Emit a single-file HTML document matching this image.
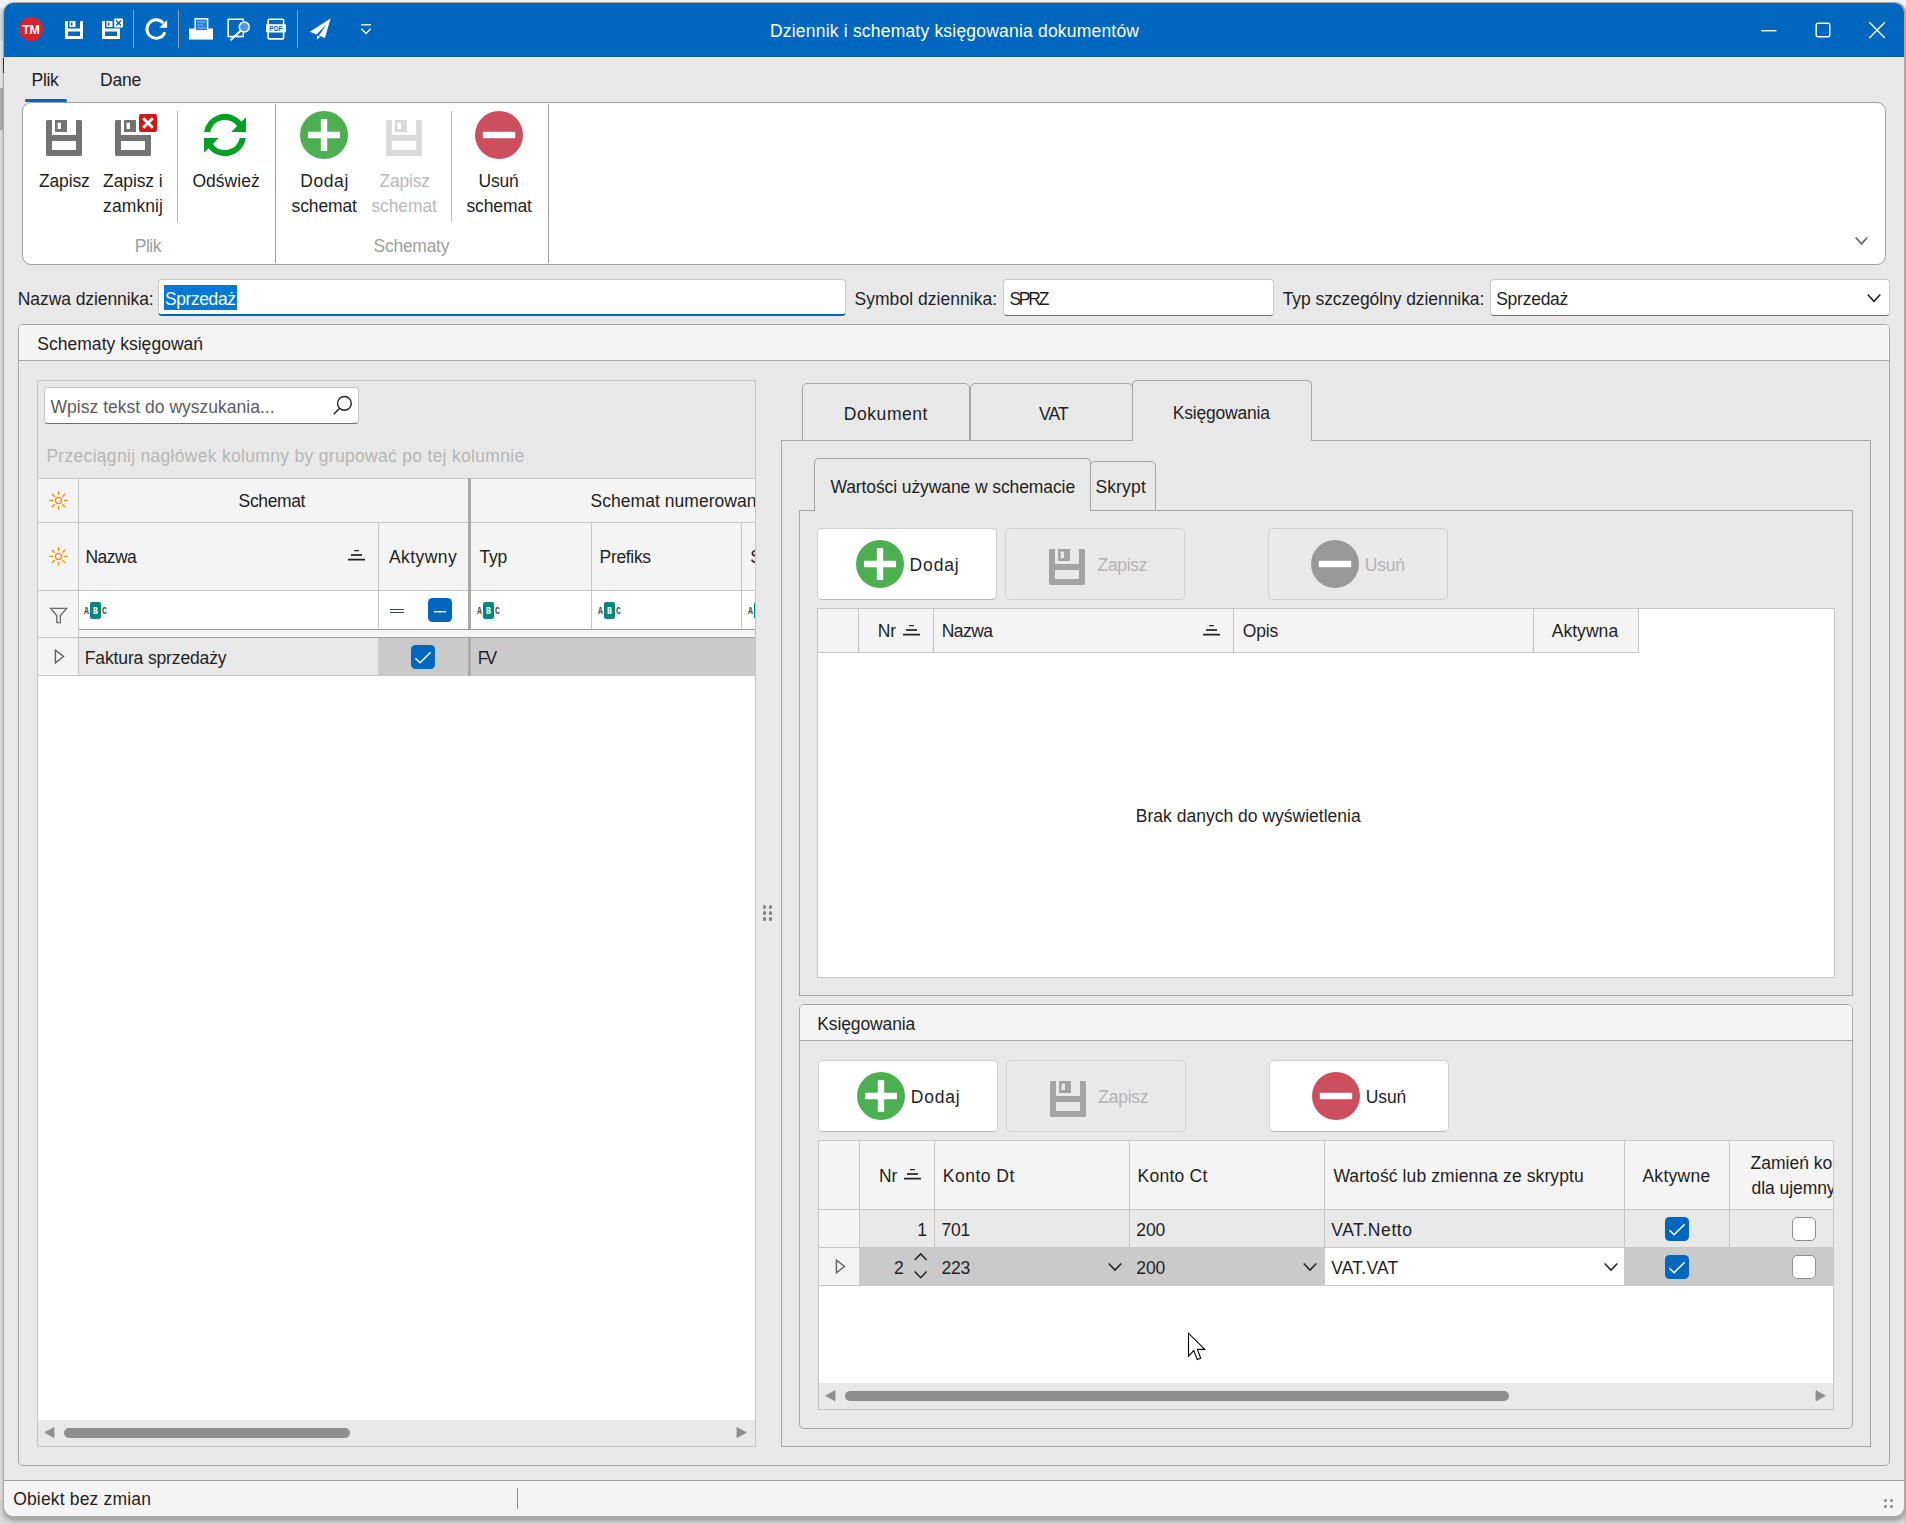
<!DOCTYPE html>
<html lang="pl"><head><meta charset="utf-8"><title>Dziennik i schematy księgowania dokumentów</title>
<style>
html,body{margin:0;padding:0}
body{width:1906px;height:1524px;position:relative;overflow:hidden;background:#f1f1f1;font-family:"Liberation Sans", sans-serif;font-size:17.5px;color:#1f1f1f}
div,span,svg{position:absolute;display:block}
span{white-space:nowrap}
</style></head>
<body>
<div style="left:0px;top:0px;width:1906px;height:1524px;background:#f1f1f1"></div>
<div style="left:0px;top:8px;width:4px;height:33px;background:#dedede"></div>
<div style="left:0px;top:41px;width:4px;height:47px;background:#ececec"></div>
<div style="left:0px;top:88px;width:4px;height:42px;background:#b4b4b4"></div>
<div style="left:0px;top:130px;width:4px;height:1394px;background:#e4e4e4"></div>
<div style="left:0px;top:1500px;width:1906px;height:24px;background:#dadada"></div>
<div style="left:1904px;top:40px;width:2px;height:1484px;background:#cfcfcf"></div>
<div style="left:2.5px;top:1.5px;width:1903px;height:1516.5px;background:#a9a9a9;border-radius:11px;box-shadow:0 3px 4px rgba(0,0,0,.28)"></div>
<div style="left:4px;top:3px;width:1900px;height:1513px;background:#e8e8e8;border-radius:9.5px"></div>
<div style="left:4px;top:3px;width:1900px;height:54px;background:#0067c0;border-radius:9.5px 9.5px 0 0"></div>
<div style="left:2.6px;top:58px;width:1.3px;height:15px;background:#3a3026"></div>
<div style="left:4px;top:56px;width:1900px;height:1px;background:#005cbb"></div>
<div style="left:4px;top:57px;width:1900px;height:1px;background:#f2eee8"></div>
<div style="left:4px;top:1480px;width:1900px;height:36px;background:#f4f4f4;border-top:1px solid #a4a4a4;border-radius:0 0 9.5px 9.5px;box-sizing:border-box"></div>
<div style="left:517px;top:1488px;width:1px;height:21px;background:#8a8a8a"></div>
<span style="left:13.20px;top:1487px;line-height:24px;color:#1f1f1f;letter-spacing:0.169px;">Obiekt bez zmian</span>
<div style="left:1884.1px;top:1499.0px;width:3px;height:3px;background:#8a8a8a;border-radius:50%"></div>
<div style="left:1884.1px;top:1505.0px;width:3px;height:3px;background:#8a8a8a;border-radius:50%"></div>
<div style="left:1890.2px;top:1499.0px;width:3px;height:3px;background:#8a8a8a;border-radius:50%"></div>
<div style="left:1890.2px;top:1505.0px;width:3px;height:3px;background:#8a8a8a;border-radius:50%"></div>
<svg style="left:19px;top:17px;" width="24" height="24" viewBox="0 0 24 24"><circle cx="12" cy="12" r="12" fill="#dc2128"/></svg>
<span style="left:22.20px;top:21px;line-height:18px;color:#fff;letter-spacing:-0.369px;font-size:12.4px;font-weight:bold;">TM</span>
<svg style="left:65px;top:21px;" width="18" height="18" viewBox="0 0 36 36"><path fill="#fff" fill-rule="evenodd" d="M1.5 0H6V15H30V0H34.5Q36 0 36 1.5V34.5Q36 36 34.5 36H1.5Q0 36 0 34.5V1.5Q0 0 1.5 0ZM6 21H30V30H6ZM9 0H21V12H9ZM11.6 2.8H15V9.1H11.6Z"/></svg>
<svg style="left:102px;top:21px;" width="18" height="18" viewBox="0 0 36 36"><path fill="#fff" fill-rule="evenodd" d="M1.5 0H6V15H36V34.5Q36 36 34.5 36H1.5Q0 36 0 34.5V1.5Q0 0 1.5 0ZM6 21H30V30H6ZM9 0H21V12H9ZM11.6 2.8H15V9.1H11.6Z"/></svg>
<svg style="left:114px;top:18px;" width="9.5" height="9.5" viewBox="0 0 9.5 9.5"><rect x=".2" y=".4" width="8.8" height="9.1" rx=".8" fill="#fff"/><path d="M2.2 2.5L7 7.4M7 2.5L2.2 7.4" stroke="#0067c0" stroke-width="1.4"/></svg>
<div style="left:133px;top:10px;width:1px;height:38px;background:#9d9a94"></div>
<div style="left:178px;top:10px;width:1px;height:38px;background:#9d9a94"></div>
<div style="left:297px;top:10px;width:1px;height:38px;background:#9d9a94"></div>
<svg style="left:144px;top:17px;" width="25" height="24" viewBox="0 0 25 24"><path d="M19.2 6.1A9.2 9.2 0 1 0 20.85 15.15" fill="none" stroke="#fff" stroke-width="3"/><path d="M23.1 3.1V10.7H15.2Z" fill="#fff"/></svg>
<svg style="left:188px;top:17px;" width="26" height="24" viewBox="0 0 26 24"><path d="M1 11.5H25V22.6H1Z" fill="#fff"/><rect x="7.2" y="1.8" width="12.4" height="12" fill="#2a7bd0" stroke="#fff" stroke-width="1.5"/><path d="M9.5 5H17.5M9.5 8H15M9.5 11H17.5" stroke="#8cbcec" stroke-width="1.1"/></svg>
<svg style="left:226px;top:17px;" width="26" height="26" viewBox="0 0 26 26"><path d="M17.3 4V2.3H2.2V19.6H13" fill="none" stroke="#fff" stroke-width="1.5"/><path d="M17.3 15.5V19.6H10.5" fill="none" stroke="#fff" stroke-width="1.5"/><circle cx="18.3" cy="10" r="5" fill="#4f97e0" stroke="#fff" stroke-width="1.5"/><path d="M14.6 13.8L4.5 23.3" stroke="#fff" stroke-width="2"/></svg>
<svg style="left:265px;top:17px;" width="23" height="24" viewBox="0 0 23 24"><rect x="3.2" y="2.3" width="15.4" height="19.6" rx="1" fill="none" stroke="#fff" stroke-width="1.6"/><rect x="1" y="7.2" width="20" height="8.4" rx="1" fill="#fff"/></svg>
<svg style="left:266px;top:24px;" width="20" height="9" viewBox="0 0 20 9"><text x="3.3" y="6.8" font-family="Liberation Sans, sans-serif" font-weight="bold" font-size="7.6" textLength="13.4" lengthAdjust="spacingAndGlyphs" fill="#0067c0">PDF</text></svg>
<svg style="left:308px;top:17px;" width="25" height="24" viewBox="0 0 25 24"><path d="M22.6 1.6L1.8 14.8L8.6 17.6L18.5 7.2L11 18.6L16.9 21Z" fill="#fff"/><path d="M9 18.6L9.1 22.4L12.3 19.8Z" fill="#fff"/></svg>
<svg style="left:360px;top:23px;" width="12" height="12" viewBox="0 0 12 12"><path d="M1 1.8H11" stroke="#fff" stroke-width="1.3"/><path d="M1.4 5.7L6 10.4L10.6 5.7" fill="none" stroke="#fff" stroke-width="1.4"/></svg>
<span style="left:770.00px;top:19px;line-height:24px;color:#fff;letter-spacing:0.197px;">Dziennik i schematy księgowania dokumentów</span>
<svg style="left:1760px;top:22px;" width="18" height="17" viewBox="0 0 18 17"><path d="M1.4 8.7H16.5" stroke="#fff" stroke-width="1.4"/></svg>
<svg style="left:1814px;top:21px;" width="18" height="18" viewBox="0 0 18 18"><rect x="2.2" y="2.2" width="13.6" height="13.6" rx="2" fill="none" stroke="#fff" stroke-width="1.4"/></svg>
<svg style="left:1868px;top:21px;" width="18" height="18" viewBox="0 0 18 18"><path d="M1.3 1.3L16.9 16.9M16.9 1.3L1.3 16.9" stroke="#fff" stroke-width="1.4"/></svg>
<span style="left:31.60px;top:68px;line-height:24px;color:#1f1f1f;letter-spacing:-0.349px;">Plik</span>
<span style="left:100.10px;top:68px;line-height:24px;color:#1f1f1f;letter-spacing:-0.201px;">Dane</span>
<div style="left:25px;top:99px;width:42px;height:3px;background:#0067c0;border-radius:1.5px"></div>
<div style="left:22px;top:102px;width:1864px;height:163px;background:#fff;border:1px solid #a2a2a2;border-radius:9px;box-sizing:border-box"></div>
<svg style="left:46px;top:120px;" width="36" height="36" viewBox="0 0 36 36"><path fill="#737373" fill-rule="evenodd" d="M1.5 0H6V15H30V0H34.5Q36 0 36 1.5V34.5Q36 36 34.5 36H1.5Q0 36 0 34.5V1.5Q0 0 1.5 0ZM6 21H30V30H6ZM9 0H21V12H9ZM11.6 2.8H15V9.1H11.6Z"/></svg>
<svg style="left:115px;top:120px;" width="36" height="36" viewBox="0 0 36 36"><path fill="#737373" fill-rule="evenodd" d="M1.5 0H6V15H36V34.5Q36 36 34.5 36H1.5Q0 36 0 34.5V1.5Q0 0 1.5 0ZM6 21H30V30H6ZM9 0H21V12H9ZM11.6 2.8H15V9.1H11.6Z"/></svg>
<svg style="left:139px;top:114px;" width="18" height="18" viewBox="0 0 18 18"><rect width="18" height="18" rx="2" fill="#d01818"/><path d="M4.2 4.2L13.8 13.8M13.8 4.2L4.2 13.8" stroke="#fff" stroke-width="2.9"/></svg>
<div style="left:177px;top:111px;width:1px;height:111px;background:#b9b9b9"></div>
<div style="left:451px;top:111px;width:1px;height:111px;background:#b9b9b9"></div>
<div style="left:275px;top:104px;width:1px;height:159px;background:#9c9c9c"></div>
<div style="left:548px;top:104px;width:1px;height:159px;background:#9c9c9c"></div>
<svg style="left:204px;top:114px;" width="42" height="42" viewBox="0 0 42 42"><path d="M.2 18A21 21 0 0 1 37.4 7.8L42 3.2V18H27.2L33.1 12.1A15 15 0 0 0 6.3 18Z" fill="#04a024"/><path d="M.2 18A21 21 0 0 1 37.4 7.8L42 3.2V18H27.2L33.1 12.1A15 15 0 0 0 6.3 18Z" fill="#04a024" transform="rotate(180 21 21)"/></svg>
<svg style="left:300px;top:111px;" width="48" height="48" viewBox="0 0 48 48"><circle cx="24" cy="24" r="24" fill="#4caf50"/><path fill="#fff" d="M20.8 8H27.2V20.8H40V27.2H27.2V40H20.8V27.2H8V20.8H20.8Z"/></svg>
<svg style="left:386px;top:120px;" width="36" height="36" viewBox="0 0 36 36"><path fill="#d9d9d9" fill-rule="evenodd" d="M1.5 0H6V15H30V0H34.5Q36 0 36 1.5V34.5Q36 36 34.5 36H1.5Q0 36 0 34.5V1.5Q0 0 1.5 0ZM6 21H30V30H6ZM9 0H21V12H9ZM11.6 2.8H15V9.1H11.6Z"/></svg>
<svg style="left:475px;top:111px;" width="48" height="48" viewBox="0 0 48 48"><circle cx="24" cy="24" r="24" fill="#cb4f5c"/><rect x="7.8" y="20.8" width="32.4" height="6.4" fill="#fff"/></svg>
<span style="left:38.90px;top:169px;line-height:24px;color:#1f1f1f;letter-spacing:-0.139px;">Zapisz</span>
<span style="left:103.10px;top:169px;line-height:24px;color:#1f1f1f;letter-spacing:-0.115px;">Zapisz i</span>
<span style="left:103.10px;top:194px;line-height:24px;color:#1f1f1f;letter-spacing:0.095px;">zamknij</span>
<span style="left:192.40px;top:169px;line-height:24px;color:#1f1f1f;letter-spacing:0.024px;">Odśwież</span>
<span style="left:300.20px;top:169px;line-height:24px;color:#1f1f1f;letter-spacing:0.591px;">Dodaj</span>
<span style="left:291.50px;top:194px;line-height:24px;color:#1f1f1f;letter-spacing:-0.113px;">schemat</span>
<span style="left:379.60px;top:169px;line-height:24px;color:#b9b9b9;letter-spacing:-0.239px;">Zapisz</span>
<span style="left:371.40px;top:194px;line-height:24px;color:#b9b9b9;letter-spacing:-0.096px;">schemat</span>
<span style="left:478.60px;top:169px;line-height:24px;color:#1f1f1f;letter-spacing:-0.207px;">Usuń</span>
<span style="left:466.50px;top:194px;line-height:24px;color:#1f1f1f;letter-spacing:-0.129px;">schemat</span>
<span style="left:134.70px;top:234px;line-height:24px;color:#9e9e9e;letter-spacing:-0.449px;">Plik</span>
<span style="left:373.60px;top:234px;line-height:24px;color:#9e9e9e;letter-spacing:-0.280px;">Schematy</span>
<svg style="left:1855px;top:237px;overflow:visible;" width="13" height="7.8" viewBox="0 0 13 7.8"><path d="M.7 .5L6.5 6.8999999999999995L12.3 .5" fill="none" stroke="#6a6a6a" stroke-width="1.8"/></svg>
<span style="left:17.80px;top:287px;line-height:24px;color:#1f1f1f;letter-spacing:-0.086px;">Nazwa dziennika:</span>
<div style="left:158px;top:279px;width:688px;height:37px;background:#fff;border:1px solid #c9c9c9;border-bottom:2.5px solid #0067c0;border-radius:4px;box-sizing:border-box"></div>
<div style="left:164px;top:285px;width:73px;height:25px;background:#0078d7"></div>
<span style="left:165.00px;top:287px;line-height:24px;color:#fff;letter-spacing:-0.426px;">Sprzedaż</span>
<span style="left:854.50px;top:287px;line-height:24px;color:#1f1f1f;letter-spacing:0.040px;">Symbol dziennika:</span>
<div style="left:1003px;top:279px;width:271px;height:37px;background:#fff;border:1px solid #c9c9c9;border-bottom:1.5px solid #6c6c6c;border-radius:4px;box-sizing:border-box"></div>
<span style="left:1009.40px;top:287px;line-height:24px;color:#1f1f1f;letter-spacing:-2.228px;">SPRZ</span>
<span style="left:1282.70px;top:287px;line-height:24px;color:#1f1f1f;letter-spacing:-0.068px;">Typ szczególny dziennika:</span>
<div style="left:1490px;top:279px;width:400px;height:37px;background:#fff;border:1px solid #c9c9c9;border-bottom:1.5px solid #6c6c6c;border-radius:4px;box-sizing:border-box"></div>
<span style="left:1496.20px;top:287px;line-height:24px;color:#1f1f1f;letter-spacing:-0.254px;">Sprzedaż</span>
<svg style="left:1867px;top:293.5px;overflow:visible;" width="14" height="8.2" viewBox="0 0 14 8.2"><path d="M.7 .5L7.0 7.299999999999999L13.3 .5" fill="none" stroke="#222" stroke-width="1.5"/></svg>
<div style="left:18px;top:324px;width:1872px;height:1142px;border:1px solid #a6a6a6;border-radius:5px;box-sizing:border-box"></div>
<div style="left:19px;top:325px;width:1870px;height:36px;background:#f4f4f4;border-bottom:1px solid #a6a6a6;border-radius:4px 4px 0 0;box-sizing:border-box"></div>
<span style="left:37.30px;top:332px;line-height:24px;color:#1f1f1f;letter-spacing:0.022px;">Schematy księgowań</span>
<div style="left:37px;top:380px;width:719px;height:1067px;border:1px solid #c6c6c6;box-sizing:border-box"></div>
<div style="left:44px;top:387px;width:315px;height:37px;background:#fff;border:1px solid #c9c9c9;border-bottom:1.5px solid #6c6c6c;border-radius:4px;box-sizing:border-box"></div>
<span style="left:50.60px;top:395px;line-height:24px;color:#5c5c5c;letter-spacing:0.010px;">Wpisz tekst do wyszukania...</span>
<svg style="left:332px;top:395px;" width="22" height="21" viewBox="0 0 22 21"><circle cx="12.45" cy="8.4" r="6.85" fill="none" stroke="#222" stroke-width="1.4"/><path d="M7.6 13.3L1.8 19.2" stroke="#222" stroke-width="1.5"/></svg>
<span style="left:46.40px;top:444px;line-height:24px;color:#b6b6b6;letter-spacing:0.303px;">Przeciągnij nagłówek kolumny by grupować po tej kolumnie</span>
<div style="left:38px;top:478px;width:717px;height:112px;background:#f4f4f4;border-top:1px solid #c6c6c6;box-sizing:border-box"></div>
<div style="left:38px;top:522px;width:717px;height:1px;background:#c6c6c6"></div>
<div style="left:38px;top:590px;width:717px;height:1px;background:#c6c6c6"></div>
<div style="left:79px;top:591px;width:676px;height:38px;background:#fff"></div>
<div style="left:38px;top:591px;width:40px;height:46px;background:#f4f4f4"></div>
<div style="left:79px;top:628.5px;width:676px;height:1.8px;background:#9a9a9a"></div>
<div style="left:79px;top:630.3px;width:676px;height:7px;background:#f4f4f4"></div>
<div style="left:38px;top:637px;width:41px;height:1px;background:#c6c6c6"></div>
<div style="left:79px;top:636.8px;width:676px;height:1.3px;background:#a2a2a2"></div>
<div style="left:38px;top:638px;width:40px;height:37px;background:#f4f4f4"></div>
<div style="left:79px;top:638px;width:299px;height:37px;background:#e8e8e8"></div>
<div style="left:378px;top:638px;width:377px;height:37px;background:#cacaca"></div>
<div style="left:38px;top:675px;width:717px;height:1px;background:#c6c6c6"></div>
<div style="left:38px;top:676px;width:717px;height:744px;background:#fff"></div>
<div style="left:78px;top:478px;width:1px;height:198px;background:#c6c6c6"></div>
<div style="left:378px;top:522px;width:1px;height:107px;background:#c6c6c6"></div>
<div style="left:591px;top:522px;width:1px;height:107px;background:#c6c6c6"></div>
<div style="left:741px;top:522px;width:1px;height:107px;background:#c6c6c6"></div>
<div style="left:468px;top:478px;width:3px;height:151px;background:#a9a9a9"></div>
<div style="left:468px;top:637px;width:3px;height:39px;background:#a9a9a9"></div>
<svg style="left:48px;top:490px;" width="21" height="21" viewBox="0 0 21 21"><circle cx="10.5" cy="10.5" r="3.05" fill="none" stroke="#ff8c00" stroke-width="1.25"/><path d="M16.40 10.50L19.30 10.50M14.67 14.67L16.72 16.72M10.50 16.40L10.50 19.30M6.33 14.67L4.28 16.72M4.60 10.50L1.70 10.50M6.33 6.33L4.28 4.28M10.50 4.60L10.50 1.70M14.67 6.33L16.72 4.28" stroke="#ff8c00" stroke-width="1.3" stroke-linecap="round"/></svg>
<svg style="left:48px;top:546px;" width="21" height="21" viewBox="0 0 21 21"><circle cx="10.5" cy="10.399999999999977" r="3.05" fill="none" stroke="#ff8c00" stroke-width="1.25"/><path d="M16.40 10.40L19.30 10.40M14.67 14.57L16.72 16.62M10.50 16.30L10.50 19.20M6.33 14.57L4.28 16.62M4.60 10.40L1.70 10.40M6.33 6.23L4.28 4.18M10.50 4.50L10.50 1.60M14.67 6.23L16.72 4.18" stroke="#ff8c00" stroke-width="1.3" stroke-linecap="round"/></svg>
<span style="left:238.60px;top:489px;line-height:24px;color:#1f1f1f;letter-spacing:-0.366px;">Schemat</span>
<div style="left:471px;top:489px;width:284px;height:24px;overflow:hidden"><span style="left:119.50px;top:0;line-height:24px;color:#1f1f1f;letter-spacing:0.042px;">Schemat numerowania</span></div>
<span style="left:85.50px;top:545px;line-height:24px;color:#1f1f1f;letter-spacing:-0.565px;">Nazwa</span>
<svg style="left:348px;top:550px;" width="17" height="11" viewBox="0 0 17 11"><rect x="6" y="0" width="5" height="1.2" rx=".6" fill="#222"/><rect x="3" y="4" width="11" height="2" fill="#404040"/><rect x="0" y="8.8" width="17" height="1.6" rx=".5" fill="#222"/></svg>
<span style="left:389.00px;top:545px;line-height:24px;color:#1f1f1f;letter-spacing:0.432px;">Aktywny</span>
<span style="left:479.50px;top:545px;line-height:24px;color:#1f1f1f;letter-spacing:-0.237px;">Typ</span>
<span style="left:599.60px;top:545px;line-height:24px;color:#1f1f1f;letter-spacing:-0.339px;">Prefiks</span>
<div style="left:742px;top:545px;width:13px;height:24px;overflow:hidden"><span style="left:8.30px;top:0;line-height:24px;color:#1f1f1f;letter-spacing:0.000px;">Sufiks</span></div>
<svg style="left:49px;top:607px;" width="20" height="17" viewBox="0 0 20 17"><path d="M1.6 1.4H17.6L11.4 8.6V15.6H7.8V8.6Z" fill="none" stroke="#6e6e6e" stroke-width="1.4" stroke-linejoin="miter"/></svg>
<div style="left:84px;top:602px;width:24px;height:17px;font:bold 11px 'Liberation Mono',monospace;color:#4a4a4a;line-height:18px;white-space:nowrap"><span style="left:.1px;top:0;transform:scaleX(.74);transform-origin:0 0">A</span><span style="left:6.3px;top:.4px;width:10.6px;height:16.4px;background:#00897b;border-radius:2px"></span><span style="left:9.2px;top:0;color:#fff;transform:scaleX(.74);transform-origin:0 0">B</span><span style="left:18.3px;top:0;transform:scaleX(.74);transform-origin:0 0">C</span></div>
<div style="left:477px;top:602px;width:24px;height:17px;font:bold 11px 'Liberation Mono',monospace;color:#4a4a4a;line-height:18px;white-space:nowrap"><span style="left:.1px;top:0;transform:scaleX(.74);transform-origin:0 0">A</span><span style="left:6.3px;top:.4px;width:10.6px;height:16.4px;background:#00897b;border-radius:2px"></span><span style="left:9.2px;top:0;color:#fff;transform:scaleX(.74);transform-origin:0 0">B</span><span style="left:18.3px;top:0;transform:scaleX(.74);transform-origin:0 0">C</span></div>
<div style="left:598px;top:602px;width:24px;height:17px;font:bold 11px 'Liberation Mono',monospace;color:#4a4a4a;line-height:18px;white-space:nowrap"><span style="left:.1px;top:0;transform:scaleX(.74);transform-origin:0 0">A</span><span style="left:6.3px;top:.4px;width:10.6px;height:16.4px;background:#00897b;border-radius:2px"></span><span style="left:9.2px;top:0;color:#fff;transform:scaleX(.74);transform-origin:0 0">B</span><span style="left:18.3px;top:0;transform:scaleX(.74);transform-origin:0 0">C</span></div>
<div style="left:742px;top:590px;width:13px;height:38px;overflow:hidden">
<div style="left:6.0px;top:12px;width:24px;height:17px;font:bold 11px 'Liberation Mono',monospace;color:#4a4a4a;line-height:18px;white-space:nowrap"><span style="left:.1px;top:0;transform:scaleX(.74);transform-origin:0 0">A</span><span style="left:6.3px;top:.4px;width:10.6px;height:16.4px;background:#00897b;border-radius:2px"></span><span style="left:9.2px;top:0;color:#fff;transform:scaleX(.74);transform-origin:0 0">B</span><span style="left:18.3px;top:0;transform:scaleX(.74);transform-origin:0 0">C</span></div>
</div>
<div style="left:390px;top:608.5px;width:14px;height:1.3px;background:#3d464b"></div>
<div style="left:390px;top:611.7px;width:14px;height:1.3px;background:#3d464b"></div>
<svg style="left:428px;top:598px;" width="24" height="24" viewBox="0 0 24 24"><rect width="24" height="24" rx="4.5" fill="#0067c0"/><path d="M6 13.7H18" stroke="#fff" stroke-width="1.5"/></svg>
<svg style="left:54px;top:649px;" width="10.5" height="15" viewBox="0 0 10.5 15"><path d="M1.4 1.1L9.5 7.5L1.4 13.8Z" fill="none" stroke="#666" stroke-width="1.45" stroke-linejoin="miter"/></svg>
<span style="left:84.80px;top:646px;line-height:24px;color:#1f1f1f;letter-spacing:-0.137px;">Faktura sprzedaży</span>
<svg style="left:411px;top:645px;" width="24" height="24" viewBox="0 0 24 24"><rect width="24" height="24" rx="4.5" fill="#0067c0"/><path d="M4.4 13.3L9.1 17.7L19.7 7.2" fill="none" stroke="#fff" stroke-width="1.55"/></svg>
<span style="left:477.80px;top:646px;line-height:24px;color:#1f1f1f;letter-spacing:-3.090px;">FV</span>
<div style="left:38px;top:1420px;width:717px;height:26px;background:#e8e8e8"></div>
<svg style="left:44px;top:1427px;" width="11" height="11" viewBox="0 0 11 11"><path d="M.8 5.5L10 .5V10.5Z" fill="#8e8e8e" stroke="#8e8e8e" stroke-width=".8" stroke-linejoin="round"/></svg>
<svg style="left:736px;top:1427px;" width="11" height="11" viewBox="0 0 11 11"><path d="M10.2 5.5L1 .5V10.5Z" fill="#8e8e8e" stroke="#8e8e8e" stroke-width=".8" stroke-linejoin="round"/></svg>
<div style="left:64px;top:1428px;width:286px;height:10px;background:#8e8e8e;border-radius:5px"></div>
<div style="left:763.3px;top:905.4px;width:3.2px;height:3.2px;background:#828282;border-radius:50%"></div>
<div style="left:763.3px;top:911.4px;width:3.2px;height:3.2px;background:#828282;border-radius:50%"></div>
<div style="left:763.3px;top:917.4px;width:3.2px;height:3.2px;background:#828282;border-radius:50%"></div>
<div style="left:769.3px;top:905.4px;width:3.2px;height:3.2px;background:#828282;border-radius:50%"></div>
<div style="left:769.3px;top:911.4px;width:3.2px;height:3.2px;background:#828282;border-radius:50%"></div>
<div style="left:769.3px;top:917.4px;width:3.2px;height:3.2px;background:#828282;border-radius:50%"></div>
<div style="left:781px;top:440px;width:1090px;height:1007px;border:1px solid #a6a6a6;box-sizing:border-box"></div>
<div style="left:802px;top:383px;width:168px;height:58px;border:1px solid #a6a6a6;border-radius:5px 5px 0 0;box-sizing:border-box"></div>
<div style="left:970px;top:383px;width:163px;height:58px;border:1px solid #a6a6a6;border-radius:5px 5px 0 0;box-sizing:border-box"></div>
<div style="left:1132px;top:380px;width:180px;height:61px;background:#e8e8e8;border:1px solid #a6a6a6;border-bottom:none;border-radius:5px 5px 0 0;box-sizing:border-box"></div>
<span style="left:843.80px;top:402px;line-height:24px;color:#1f1f1f;letter-spacing:0.558px;">Dokument</span>
<span style="left:1039.10px;top:402px;line-height:24px;color:#1f1f1f;letter-spacing:-0.924px;">VAT</span>
<span style="left:1172.70px;top:401px;line-height:24px;color:#1f1f1f;letter-spacing:-0.190px;">Księgowania</span>
<div style="left:799px;top:510px;width:1054px;height:486px;border:1px solid #a6a6a6;box-sizing:border-box"></div>
<div style="left:1090px;top:461px;width:66px;height:50px;border:1px solid #a6a6a6;border-radius:5px 5px 0 0;box-sizing:border-box"></div>
<div style="left:814px;top:458px;width:277px;height:53px;background:#e8e8e8;border:1px solid #a6a6a6;border-bottom:none;border-radius:5px 5px 0 0;box-sizing:border-box"></div>
<span style="left:830.40px;top:475px;line-height:24px;color:#1f1f1f;letter-spacing:-0.097px;">Wartości używane w schemacie</span>
<span style="left:1095.40px;top:475px;line-height:24px;color:#1f1f1f;letter-spacing:0.153px;">Skrypt</span>
<div style="left:817px;top:528px;width:180px;height:72px;background:#fff;border:1px solid #cdcdcd;border-bottom-color:#b5b5b5;border-radius:5px;box-sizing:border-box"></div>
<div style="left:1005px;top:528px;width:180px;height:72px;background:#e9e9e9;border:1px solid #d1d1d1;border-radius:5px;box-sizing:border-box"></div>
<div style="left:1268px;top:528px;width:180px;height:72px;background:#e9e9e9;border:1px solid #d1d1d1;border-radius:5px;box-sizing:border-box"></div>
<svg style="left:856px;top:540px;" width="48" height="48" viewBox="0 0 48 48"><circle cx="24" cy="24" r="24" fill="#4caf50"/><path fill="#fff" d="M20.8 8H27.2V20.8H40V27.2H27.2V40H20.8V27.2H8V20.8H20.8Z"/></svg>
<span style="left:909.60px;top:553px;line-height:24px;color:#1f1f1f;letter-spacing:0.841px;">Dodaj</span>
<svg style="left:1049px;top:549px;" width="36" height="36" viewBox="0 0 36 36"><path fill="#a3a3a3" fill-rule="evenodd" d="M1.5 0H6V15H30V0H34.5Q36 0 36 1.5V34.5Q36 36 34.5 36H1.5Q0 36 0 34.5V1.5Q0 0 1.5 0ZM6 21H30V30H6ZM9 0H21V12H9ZM11.6 2.8H15V9.1H11.6Z"/></svg>
<span style="left:1097.50px;top:553px;line-height:24px;color:#b4b4b4;letter-spacing:-0.299px;">Zapisz</span>
<svg style="left:1311px;top:540px;" width="48" height="48" viewBox="0 0 48 48"><circle cx="24" cy="24" r="24" fill="#999999"/><rect x="7.8" y="20.8" width="32.4" height="6.4" fill="#fff"/></svg>
<span style="left:1364.80px;top:553px;line-height:24px;color:#b4b4b4;letter-spacing:-0.240px;">Usuń</span>
<div style="left:817px;top:608px;width:1018px;height:370px;background:#fff;border:1px solid #c6c6c6;box-sizing:border-box"></div>
<div style="left:818px;top:609px;width:820px;height:43px;background:#f4f4f4"></div>
<div style="left:818px;top:652px;width:821px;height:1px;background:#c6c6c6"></div>
<div style="left:858px;top:609px;width:1px;height:44px;background:#c6c6c6"></div>
<div style="left:933px;top:609px;width:1px;height:44px;background:#c6c6c6"></div>
<div style="left:1233px;top:609px;width:1px;height:44px;background:#c6c6c6"></div>
<div style="left:1533px;top:609px;width:1px;height:44px;background:#c6c6c6"></div>
<div style="left:1638px;top:609px;width:1px;height:44px;background:#c6c6c6"></div>
<span style="left:877.70px;top:619px;line-height:24px;color:#1f1f1f;letter-spacing:-0.138px;">Nr</span>
<svg style="left:903px;top:624.6px;" width="17" height="11" viewBox="0 0 17 11"><rect x="6" y="0" width="5" height="1.2" rx=".6" fill="#222"/><rect x="3" y="4" width="11" height="2" fill="#404040"/><rect x="0" y="8.8" width="17" height="1.6" rx=".5" fill="#222"/></svg>
<span style="left:941.70px;top:619px;line-height:24px;color:#1f1f1f;letter-spacing:-0.540px;">Nazwa</span>
<svg style="left:1203px;top:624.6px;" width="17" height="11" viewBox="0 0 17 11"><rect x="6" y="0" width="5" height="1.2" rx=".6" fill="#222"/><rect x="3" y="4" width="11" height="2" fill="#404040"/><rect x="0" y="8.8" width="17" height="1.6" rx=".5" fill="#222"/></svg>
<span style="left:1242.80px;top:619px;line-height:24px;color:#1f1f1f;letter-spacing:-0.211px;">Opis</span>
<span style="left:1551.70px;top:619px;line-height:24px;color:#1f1f1f;letter-spacing:0.049px;">Aktywna</span>
<span style="left:1135.80px;top:804px;line-height:24px;color:#1f1f1f;letter-spacing:0.009px;">Brak danych do wyświetlenia</span>
<div style="left:799px;top:1004px;width:1054px;height:425px;border:1px solid #a6a6a6;border-radius:5px;box-sizing:border-box"></div>
<div style="left:800px;top:1005px;width:1052px;height:36px;background:#f4f4f4;border-bottom:1px solid #a6a6a6;border-radius:4px 4px 0 0;box-sizing:border-box"></div>
<span style="left:817.30px;top:1012px;line-height:24px;color:#1f1f1f;letter-spacing:-0.130px;">Księgowania</span>
<div style="left:818px;top:1060px;width:180px;height:72px;background:#fff;border:1px solid #cdcdcd;border-bottom-color:#b5b5b5;border-radius:5px;box-sizing:border-box"></div>
<div style="left:1006px;top:1060px;width:180px;height:72px;background:#e9e9e9;border:1px solid #d1d1d1;border-radius:5px;box-sizing:border-box"></div>
<div style="left:1269px;top:1060px;width:180px;height:72px;background:#fff;border:1px solid #cdcdcd;border-bottom-color:#b5b5b5;border-radius:5px;box-sizing:border-box"></div>
<svg style="left:857px;top:1072px;" width="48" height="48" viewBox="0 0 48 48"><circle cx="24" cy="24" r="24" fill="#4caf50"/><path fill="#fff" d="M20.8 8H27.2V20.8H40V27.2H27.2V40H20.8V27.2H8V20.8H20.8Z"/></svg>
<span style="left:910.80px;top:1085px;line-height:24px;color:#1f1f1f;letter-spacing:0.791px;">Dodaj</span>
<svg style="left:1050px;top:1081px;" width="36" height="36" viewBox="0 0 36 36"><path fill="#a3a3a3" fill-rule="evenodd" d="M1.5 0H6V15H30V0H34.5Q36 0 36 1.5V34.5Q36 36 34.5 36H1.5Q0 36 0 34.5V1.5Q0 0 1.5 0ZM6 21H30V30H6ZM9 0H21V12H9ZM11.6 2.8H15V9.1H11.6Z"/></svg>
<span style="left:1098.20px;top:1085px;line-height:24px;color:#b4b4b4;letter-spacing:-0.239px;">Zapisz</span>
<svg style="left:1312px;top:1072px;" width="48" height="48" viewBox="0 0 48 48"><circle cx="24" cy="24" r="24" fill="#cb4f5c"/><rect x="7.8" y="20.8" width="32.4" height="6.4" fill="#fff"/></svg>
<span style="left:1365.80px;top:1085px;line-height:24px;color:#1f1f1f;letter-spacing:-0.107px;">Usuń</span>
<div style="left:818px;top:1140px;width:1016px;height:270px;background:#fff;border:1px solid #c6c6c6;box-sizing:border-box"></div>
<div style="left:819px;top:1141px;width:1014px;height:68px;background:#f4f4f4"></div>
<div style="left:819px;top:1209px;width:1014px;height:1px;background:#c6c6c6"></div>
<div style="left:819px;top:1210px;width:40px;height:37px;background:#f4f4f4"></div>
<div style="left:860px;top:1210px;width:973px;height:37px;background:#e8e8e8"></div>
<div style="left:819px;top:1247px;width:40px;height:38px;background:#f4f4f4"></div>
<div style="left:859px;top:1247px;width:974px;height:38.5px;background:#cacaca"></div>
<div style="left:1325px;top:1247.5px;width:299px;height:37.5px;background:#fff"></div>
<div style="left:819px;top:1285px;width:40px;height:1px;background:#c6c6c6"></div>
<div style="left:819px;top:1246.5px;width:40px;height:1px;background:#c6c6c6"></div>
<div style="left:859px;top:1141px;width:1px;height:106px;background:#c6c6c6"></div>
<div style="left:934px;top:1141px;width:1px;height:106px;background:#c6c6c6"></div>
<div style="left:1129px;top:1141px;width:1px;height:106px;background:#c6c6c6"></div>
<div style="left:1324px;top:1141px;width:1px;height:106px;background:#c6c6c6"></div>
<div style="left:1624px;top:1141px;width:1px;height:106px;background:#c6c6c6"></div>
<div style="left:1729px;top:1141px;width:1px;height:106px;background:#c6c6c6"></div>
<span style="left:879.00px;top:1164px;line-height:24px;color:#1f1f1f;letter-spacing:-0.038px;">Nr</span>
<svg style="left:904px;top:1169.4px;" width="17" height="11" viewBox="0 0 17 11"><rect x="6" y="0" width="5" height="1.2" rx=".6" fill="#222"/><rect x="3" y="4" width="11" height="2" fill="#404040"/><rect x="0" y="8.8" width="17" height="1.6" rx=".5" fill="#222"/></svg>
<span style="left:942.80px;top:1164px;line-height:24px;color:#1f1f1f;letter-spacing:0.495px;">Konto Dt</span>
<span style="left:1137.60px;top:1164px;line-height:24px;color:#1f1f1f;letter-spacing:0.238px;">Konto Ct</span>
<span style="left:1333.40px;top:1164px;line-height:24px;color:#1f1f1f;letter-spacing:0.103px;">Wartość lub zmienna ze skryptu</span>
<span style="left:1642.40px;top:1164px;line-height:24px;color:#1f1f1f;letter-spacing:0.282px;">Aktywne</span>
<div style="left:1730px;top:1151px;width:103px;height:24px;overflow:hidden"><span style="left:20.60px;top:0;line-height:24px;color:#1f1f1f;letter-spacing:0.004px;">Zamień konto</span></div>
<div style="left:1730px;top:1176px;width:103px;height:24px;overflow:hidden"><span style="left:21.50px;top:0;line-height:24px;color:#1f1f1f;letter-spacing:-0.060px;">dla ujemnych</span></div>
<span style="left:917.20px;top:1218px;line-height:24px;color:#1f1f1f;letter-spacing:0.000px;">1</span>
<span style="left:941.50px;top:1218px;line-height:24px;color:#1f1f1f;letter-spacing:-0.233px;">701</span>
<span style="left:1136.30px;top:1218px;line-height:24px;color:#1f1f1f;letter-spacing:-0.083px;">200</span>
<span style="left:1331.20px;top:1218px;line-height:24px;color:#1f1f1f;letter-spacing:0.581px;">VAT.Netto</span>
<svg style="left:1665px;top:1217px;" width="24" height="24" viewBox="0 0 24 24"><rect width="24" height="24" rx="4.5" fill="#0067c0"/><path d="M4.4 13.3L9.1 17.7L19.7 7.2" fill="none" stroke="#fff" stroke-width="1.55"/></svg>
<svg style="left:1792px;top:1217px;" width="24" height="24" viewBox="0 0 24 24"><rect x=".5" y=".5" width="23" height="23" rx="4.5" fill="#fff" stroke="#8f8f8f"/></svg>
<svg style="left:835px;top:1259px;" width="10.5" height="15" viewBox="0 0 10.5 15"><path d="M1.4 1.1L9.5 7.5L1.4 13.8Z" fill="none" stroke="#666" stroke-width="1.45" stroke-linejoin="miter"/></svg>
<span style="left:893.90px;top:1256px;line-height:24px;color:#1f1f1f;letter-spacing:0.000px;">2</span>
<svg style="left:914px;top:1252.8px;overflow:visible;" width="13.3" height="7.6" viewBox="0 0 13.3 7.6"><path d="M.7 7.1L6.65 .9L12.600000000000001 7.1" fill="none" stroke="#222" stroke-width="1.5"/></svg>
<svg style="left:914px;top:1271.2px;overflow:visible;" width="13.3" height="7.6" viewBox="0 0 13.3 7.6"><path d="M.7 .5L6.65 6.699999999999999L12.600000000000001 .5" fill="none" stroke="#222" stroke-width="1.5"/></svg>
<span style="left:941.50px;top:1256px;line-height:24px;color:#1f1f1f;letter-spacing:-0.233px;">223</span>
<svg style="left:1108px;top:1262.8px;overflow:visible;" width="14" height="8" viewBox="0 0 14 8"><path d="M.7 .5L7.0 7.1L13.3 .5" fill="none" stroke="#222" stroke-width="1.5"/></svg>
<span style="left:1136.30px;top:1256px;line-height:24px;color:#1f1f1f;letter-spacing:-0.083px;">200</span>
<svg style="left:1303px;top:1262.8px;overflow:visible;" width="14" height="8" viewBox="0 0 14 8"><path d="M.7 .5L7.0 7.1L13.3 .5" fill="none" stroke="#222" stroke-width="1.5"/></svg>
<span style="left:1331.20px;top:1256px;line-height:24px;color:#1f1f1f;letter-spacing:0.216px;">VAT.VAT</span>
<svg style="left:1603.5px;top:1262.6px;overflow:visible;" width="14" height="8" viewBox="0 0 14 8"><path d="M.7 .5L7.0 7.1L13.3 .5" fill="none" stroke="#222" stroke-width="1.5"/></svg>
<svg style="left:1665px;top:1255px;" width="24" height="24" viewBox="0 0 24 24"><rect width="24" height="24" rx="4.5" fill="#0067c0"/><path d="M4.4 13.3L9.1 17.7L19.7 7.2" fill="none" stroke="#fff" stroke-width="1.55"/></svg>
<svg style="left:1792px;top:1255px;" width="24" height="24" viewBox="0 0 24 24"><rect x=".5" y=".5" width="23" height="23" rx="4.5" fill="#fff" stroke="#8f8f8f"/></svg>
<div style="left:819px;top:1382.5px;width:1014px;height:26.5px;background:#e8e8e8"></div>
<svg style="left:825px;top:1390px;" width="11" height="12" viewBox="0 0 11 12"><path d="M.8 5.8L10 .8V10.8Z" fill="#8e8e8e" stroke="#8e8e8e" stroke-width=".8" stroke-linejoin="round"/></svg>
<svg style="left:1815px;top:1390px;" width="11" height="12" viewBox="0 0 11 12"><path d="M10.2 5.8L1 .8V10.8Z" fill="#8e8e8e" stroke="#8e8e8e" stroke-width=".8" stroke-linejoin="round"/></svg>
<div style="left:845px;top:1390.5px;width:664px;height:10.7px;background:#8e8e8e;border-radius:5.5px"></div>
<svg style="left:1186px;top:1330px;" width="22" height="32" viewBox="0 0 22 32"><path d="M2.5 3.2V26.4L7.7 20.6L11.3 29.6L14.7 28.2L11.4 19.4H18.8Z" fill="#fff" stroke="#000" stroke-width="1.1" stroke-linejoin="miter"/></svg>
</body></html>
